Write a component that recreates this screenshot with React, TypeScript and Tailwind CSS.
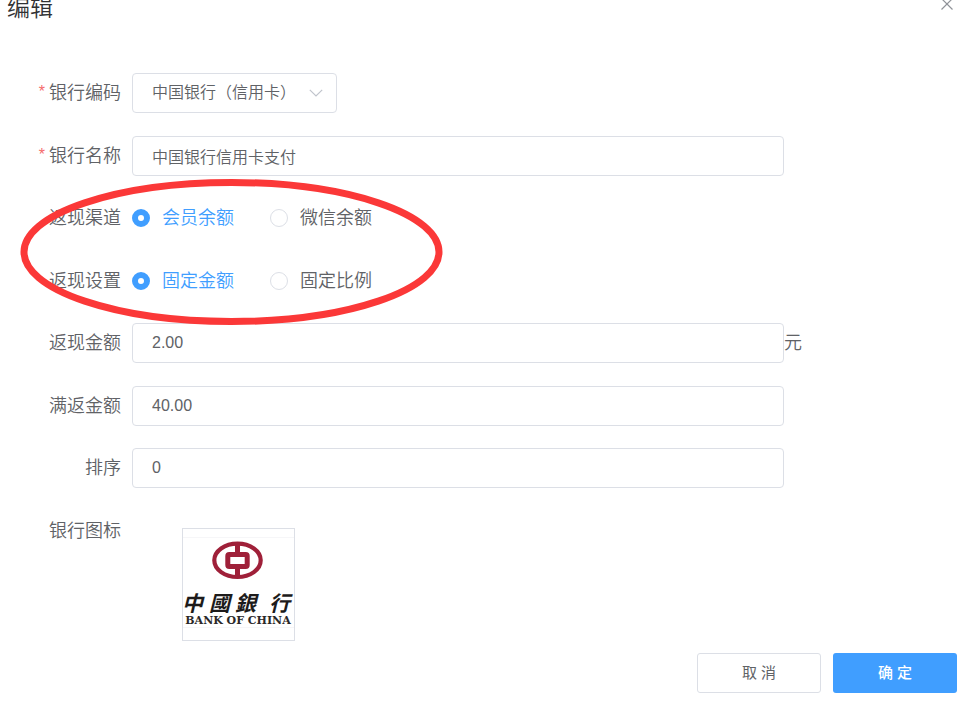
import { useState } from "react";
import type { ReactNode } from "react";

const channels = ["会员余额", "微信余额"];
const modes = ["固定金额", "固定比例"];
const banks = ["中国银行（信用卡）", "中国银行（储蓄卡）"];

const inputClass =
  "block h-10 w-full max-w-[652px] rounded border border-[#dcdfe6] bg-white px-[19px] text-base text-[#606266] outline-none focus:border-[#409eff]";

type FieldProps = {
  label: string;
  id: string;
  required?: boolean;
  children: ReactNode;
};

function Field({ label, id, required, children }: FieldProps) {
  return (
    <div className="flex odd:mb-[23px] even:not-last:mb-[22px]">
      <label
        htmlFor={id}
        className="w-[132px] shrink-0 pr-[11px] text-right text-lg leading-10"
      >
        {required && <span className="mr-1 align-[2px] text-base leading-none text-[#f56c6c]">*</span>}
        {label}
      </label>
      <div className="flex min-w-0 flex-1 items-center">{children}</div>
    </div>
  );
}

type RadioFieldProps = {
  label: string;
  name: string;
  options: string[];
  value: string;
  onChange: (value: string) => void;
  children?: ReactNode;
};

function RadioField({ label, name, options, value, onChange, children }: RadioFieldProps) {
  return (
    <div
      role="radiogroup"
      aria-labelledby={name}
      className="relative flex odd:mb-[23px] even:mb-[22px]"
    >
      <span id={name} className="w-[132px] shrink-0 pr-[11px] text-right text-lg leading-10">
        {label}
      </span>
      <div className="flex items-center gap-9">
        {options.map((option) => (
          <label key={option} className="flex cursor-pointer items-center gap-3 text-lg">
            <input
              type="radio"
              name={name}
              checked={value === option}
              onChange={() => onChange(option)}
              className="peer size-[18px] appearance-none rounded-full border border-[#dcdfe6] bg-white checked:border-[6px] checked:border-[#409eff]"
            />
            <span className="peer-checked:text-[#409eff]">{option}</span>
          </label>
        ))}
      </div>
      {children}
    </div>
  );
}

function BankLogo() {
  return (
    <svg width="111" height="111" viewBox="0 0 111 111" role="img" aria-label="中国银行">
      <path d="M0 8.5H111M0 98.5H111" stroke="#f6f6f8" />
      <ellipse cx="54.5" cy="31.3" rx="23.2" ry="16.7" fill="none" stroke="#9f2039" strokeWidth="4.2" />
      <path d="M54.5 14V25M54.5 38V49" stroke="#9f2039" strokeWidth="5" />
      <rect x="44.8" y="25.5" width="19.4" height="12" rx="1.5" fill="none" stroke="#9f2039" strokeWidth="5" />
      <text
        x="-1 26 52 86"
        y="82 82 82 82"
        fill="#1d1b1b"
        fontSize="21"
        fontWeight="700"
        fontStyle="italic"
        fontFamily="'Noto Sans CJK TC', sans-serif"
      >
        中國銀行
      </text>
      <text
        x="55"
        y="95"
        textAnchor="middle"
        fill="#2b2828"
        fontSize="11"
        fontWeight="700"
        fontFamily="'DejaVu Serif', serif"
      >
        BANK OF CHINA
      </text>
    </svg>
  );
}

export default function App() {
  const [bank, setBank] = useState(banks[0]);
  const [name, setName] = useState("中国银行信用卡支付");
  const [channel, setChannel] = useState(channels[0]);
  const [mode, setMode] = useState(modes[0]);
  const [amount, setAmount] = useState("2.00");
  const [threshold, setThreshold] = useState("40.00");
  const [sort, setSort] = useState("0");

  return (
    <div className="overflow-hidden bg-white font-['Liberation_Sans','Noto_Sans_CJK_SC',sans-serif] font-[350] text-[#606266]">
      {/* Header */}
      <header className="-mt-2 flex items-center justify-between pr-[9px] pl-[7px]">
        <h1 className="text-[23px] leading-8 text-[#303133]">编辑</h1>
        <button type="button" aria-label="关闭" className="-mt-2 text-[#909399]">
          <svg width="14" height="14" viewBox="0 0 14 14" fill="none" stroke="currentColor" strokeWidth="1.2">
            <path d="M1.5 1.5L12.5 12.5M12.5 1.5L1.5 12.5" />
          </svg>
        </button>
      </header>

      <form onSubmit={(e) => e.preventDefault()}>
        <div className="mt-[49px]">
          <Field label="银行编码" id="bank" required>
            <div className="relative w-[205px]">
              <select
                id="bank"
                value={bank}
                onChange={(e) => setBank(e.target.value)}
                className={`${inputClass} appearance-none`}
              >
                {banks.map((item) => (
                  <option key={item}>{item}</option>
                ))}
              </select>
              <svg
                className="pointer-events-none absolute top-4 right-3.5"
                width="14"
                height="8"
                viewBox="0 0 14 8"
                fill="none"
                stroke="#c0c4cc"
                strokeWidth="1.2"
              >
                <path d="M0.8 0.8L7 7L13.2 0.8" />
              </svg>
            </div>
          </Field>
          <Field label="银行名称" id="name" required>
            <input id="name" className={inputClass} value={name} onChange={(e) => setName(e.target.value)} />
          </Field>
          <RadioField label="返现渠道" name="channel" options={channels} value={channel} onChange={setChannel} />
          <RadioField label="返现设置" name="mode" options={modes} value={mode} onChange={setMode}>
            {/* Hand-drawn marker around both radio groups */}
            <svg
              className="pointer-events-none absolute -top-[82px] left-5"
              width="424"
              height="146"
              viewBox="0 0 424 146"
              fill="none"
            >
              <ellipse cx="211.5" cy="73" rx="207.5" ry="69.5" stroke="#fb3838" strokeWidth="7" />
            </svg>
          </RadioField>
          <Field label="返现金额" id="amount">
            <input id="amount" className={inputClass} value={amount} onChange={(e) => setAmount(e.target.value)} />
            <span className="text-lg">元</span>
          </Field>
          <Field label="满返金额" id="threshold">
            <input
              id="threshold"
              className={inputClass}
              value={threshold}
              onChange={(e) => setThreshold(e.target.value)}
            />
          </Field>
          <Field label="排序" id="sort">
            <input id="sort" className={inputClass} value={sort} onChange={(e) => setSort(e.target.value)} />
          </Field>
          <Field label="银行图标" id="logo">
            <button id="logo" type="button" className="mt-[17px] ml-[50px] border border-[#dcdfe6]">
              <BankLogo />
            </button>
          </Field>
        </div>

        {/* Footer */}
        <div className="flex justify-end gap-3 pt-3 pr-1.5 pb-3.5 text-[15px]">
          <button type="button" className="h-10 w-[124px] rounded-[3px] border border-[#dcdfe6] font-normal">
            取 消
          </button>
          <button type="submit" className="h-10 w-[124px] rounded-[3px] bg-[#409eff] font-medium text-white">
            确 定
          </button>
        </div>
      </form>
    </div>
  );
}
